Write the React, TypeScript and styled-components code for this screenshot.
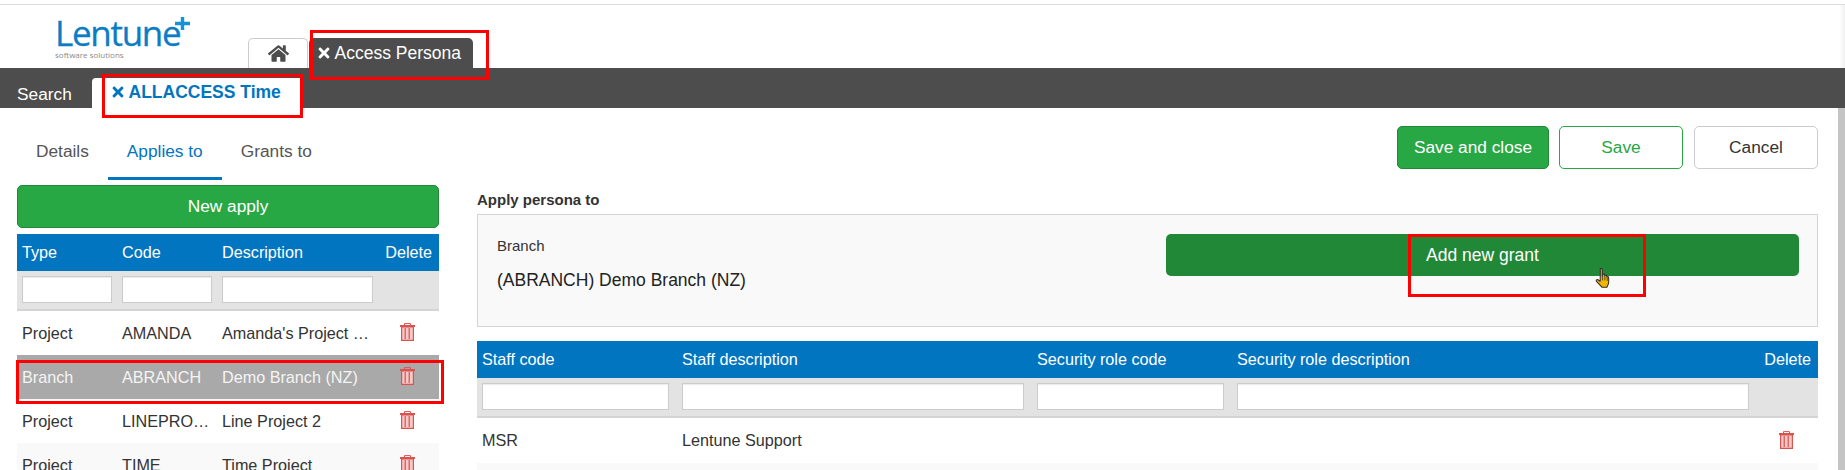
import React from "react"
import styled, { createGlobalStyle } from "styled-components"
import { FaHome, FaTimes } from "react-icons/fa"

const GlobalStyle = createGlobalStyle`
    html, body {
        margin: 0;
        height: 470px;
        overflow: hidden;
        background: #fff;
    }
    body {
        font-family: "Liberation Sans", Arial, sans-serif;
        font-size: 16.2px;
        color: #333;
    }
    * {
        box-sizing: border-box;
    }
`

const BLUE = "#0275c0"
const LEFT_COLUMNS = "90px 90px 151px 1fr"
const RIGHT_COLUMNS = "187px 342px 187px 512px 1fr"

function TrashIcon() {
    return (
        <svg width="15" height="18" viewBox="0 0 15 18" fill="none" stroke="#d9534f">
            <path d="M4.500 2.500V.6h6v1.900" />
            <path d="M0 3h15" strokeWidth="2" />
            <path d="M1.600 4v13.400h11.800V4z" fill="#f5c9c7" strokeWidth="1.200" />
            <path d="M5.200 5v11M9.200 5v11" strokeWidth="1.200" />
        </svg>
    )
}

function HandCursor() {
    return (
        <svg width="17" height="23" viewBox="0 0 18 24">
            <path
                d="M5.600 1.700c1-.8 2.100-.2 2.100 1v7l.5-2.200c1.100-.7 1.900-.2 2 .8v1l.4-.6c1-.5 1.800-.1 1.900 1v.7c1-.6 2-.2 2 1v4.600c0 1.800-1 3.500-1.900 5.200H7.300L1.400 14.800c-.4-1 .5-2 1.700-1.500l2.400 1.600z"
                fill="#f5b400"
                stroke="#2d2d2d"
                strokeWidth="1.100"
                strokeLinejoin="round"
            />
            <path d="M8 10v4M10.500 10v4M13 11v3.500" stroke="#2d2d2d" strokeWidth=".8" />
        </svg>
    )
}

function LogoCross() {
    return (
        <svg width="15" height="13" viewBox="0 0 15 13">
            <path d="M0 6.500h15M7.500 0v13" stroke="#1593d8" strokeWidth="3.400" />
        </svg>
    )
}

const leftRows = [
    { type: "Project", code: "AMANDA", description: "Amanda's Project …" },
    { type: "Branch", code: "ABRANCH", description: "Demo Branch (NZ)" },
    { type: "Project", code: "LINEPRO…", description: "Line Project 2" },
    { type: "Project", code: "TIME", description: "Time Project" },
]

export default function App() {
    return (
        <>
            <GlobalStyle />
            <Page>
                <Header>
                    <Logo>
                        <LogoName>
                            Lentune
                            <LogoPlus><LogoCross /></LogoPlus>
                        </LogoName>
                        <LogoTag>software solutions</LogoTag>
                    </Logo>
                    <HomeTab>
                        <FaHome />
                    </HomeTab>
                    <ModuleTab>
                        <CloseMark><FaTimes /></CloseMark>
                        Access Persona
                        <Highlight $top={-8} $left={1} $width={179} $height={50} />
                    </ModuleTab>
                </Header>
                <Bar>
                    <BarLink>Search</BarLink>
                    <RecordTab>
                        <CloseMark><FaTimes /></CloseMark>
                        ALLACCESS Time
                        <Highlight $top={-4} $left={10} $width={201} $height={44} />
                    </RecordTab>
                </Bar>
                <Main>
                    <LeftColumn>
                        <SubTabs>
                            <SubTab>Details</SubTab>
                            <SubTab $active>Applies to</SubTab>
                            <SubTab>Grants to</SubTab>
                        </SubTabs>
                        <NewButton>New apply</NewButton>
                        <HeadRow $columns={LEFT_COLUMNS} $gap={10}>
                            <HeadCell>Type</HeadCell>
                            <HeadCell>Code</HeadCell>
                            <HeadCell>Description</HeadCell>
                            <DeleteHead>Delete</DeleteHead>
                        </HeadRow>
                        <FilterRow $columns={LEFT_COLUMNS} $gap={10}>
                            <FilterInput />
                            <FilterInput />
                            <FilterInput />
                        </FilterRow>
                        {leftRows.map((row, i) => (
                            <LeftRow key={row.code} $selected={i === 1} $striped={i === 3}>
                                <Cell>{row.type}</Cell>
                                <Cell>{row.code}</Cell>
                                <Cell>{row.description}</Cell>
                                <TrashCell><TrashIcon /></TrashCell>
                                {i === 1 && <Highlight $top={5} $left={-1} $width={428} $height={44} />}
                            </LeftRow>
                        ))}
                    </LeftColumn>
                    <RightColumn>
                        <Actions>
                            <SaveClose>Save and close</SaveClose>
                            <SaveButton>Save</SaveButton>
                            <CancelButton>Cancel</CancelButton>
                        </Actions>
                        <SectionTitle>Apply persona to</SectionTitle>
                        <Panel>
                            <PanelInfo>
                                <PanelLabel>Branch</PanelLabel>
                                <PanelValue>(ABRANCH) Demo Branch (NZ)</PanelValue>
                            </PanelInfo>
                            <GrantButton>
                                Add new grant
                                <Highlight $top={0} $left={242} $width={238} $height={63} />
                                <Pointer><HandCursor /></Pointer>
                            </GrantButton>
                        </Panel>
                        <HeadRow $columns={RIGHT_COLUMNS} $gap={13}>
                            <HeadCell>Staff code</HeadCell>
                            <HeadCell>Staff description</HeadCell>
                            <HeadCell>Security role code</HeadCell>
                            <HeadCell>Security role description</HeadCell>
                            <DeleteHead>Delete</DeleteHead>
                        </HeadRow>
                        <FilterRow $columns={RIGHT_COLUMNS} $gap={13}>
                            <FilterInput />
                            <FilterInput />
                            <FilterInput />
                            <FilterInput />
                        </FilterRow>
                        <StaffRow>
                            <Cell>MSR</Cell>
                            <Cell>Lentune Support</Cell>
                            <Cell />
                            <Cell />
                            <TrashCell><TrashIcon /></TrashCell>
                        </StaffRow>
                        <StripeRow />
                    </RightColumn>
                </Main>
                <Scrollbar />
            </Page>
        </>
    )
}

const Page = styled.div`
    position: relative;
    width: 1845px;
    height: 470px;
    overflow: hidden;
`

const Header = styled.header`
    display: flex;
    align-items: flex-end;
    height: 64px;
    margin-top: 4px;
    padding-left: 55px;
    border-top: 1px solid #ddd;
    background: linear-gradient(to right, #fff calc(100% - 6px), #f1f1f1);
`

const Logo = styled.div`
    align-self: flex-start;
    width: 193px;
    padding-top: 11px;
`

const LogoName = styled.div`
    position: relative;
    width: fit-content;
    font-family: "Open Sans", sans-serif;
    font-size: 35px;
    line-height: 34px;
    letter-spacing: -1.300px;
    color: #0c7cc4;
    -webkit-text-stroke: .3px #0c7cc4;
`

const LogoPlus = styled.span`
    position: absolute;
    top: 1px;
    right: -10px;
    display: flex;
`

const LogoTag = styled.div`
    font-family: "Open Sans", sans-serif;
    font-size: 8px;
    line-height: 9px;
    color: #8a8a8a;
`

const HomeTab = styled.div`
    display: flex;
    align-items: center;
    justify-content: center;
    width: 60px;
    height: 30px;
    margin-right: 1px;
    font-size: 21px;
    color: #4d4d4d;
    background: #fff;
    border: 1px solid #ccc;
    border-bottom: none;
    border-radius: 5px 5px 0 0;
`

const ModuleTab = styled.div`
    position: relative;
    width: 164px;
    height: 30px;
    padding-left: 6.500px;
    font-size: 17.500px;
    line-height: 31px;
    white-space: nowrap;
    color: #fff;
    background: #4d4d4d;
    border-radius: 5px 5px 0 0;
`

const CloseMark = styled.span`
    display: inline-block;
    margin-right: 3px;
    font-size: 16px;
    line-height: 16px;
    vertical-align: -2px;
`

const Highlight = styled.span<{ $top: number; $left: number; $width: number; $height: number }>`
    position: absolute;
    z-index: 2;
    top: ${p => p.$top}px;
    left: ${p => p.$left}px;
    width: ${p => p.$width}px;
    height: ${p => p.$height}px;
    border: 3px solid #f00;
    pointer-events: none;
`

const Bar = styled.nav`
    display: flex;
    align-items: flex-end;
    height: 40px;
    padding-left: 17px;
    background: #4d4d4d;
`

const BarLink = styled.a`
    width: 75px;
    height: 30px;
    font-size: 17.300px;
    line-height: 32px;
    color: #fff;
`

const RecordTab = styled.div`
    position: relative;
    width: 208px;
    height: 30px;
    padding-left: 17.500px;
    font-size: 17.500px;
    font-weight: 700;
    line-height: 28px;
    white-space: nowrap;
    color: ${BLUE};
    background: #fff;
    border-radius: 4px 0 0 0;
`

const Main = styled.main`
    display: flex;
    gap: 38px;
    padding-left: 17px;
`

const LeftColumn = styled.section`
    width: 422px;
`

const SubTabs = styled.div`
    display: flex;
    height: 72px;
    margin-bottom: 5px;
    padding-top: 27px;
`

const SubTab = styled.div<{ $active?: boolean }>`
    height: 45px;
    padding: 6px 19px 0;
    font-size: 17.300px;
    color: ${p => (p.$active ? BLUE : "#555")};
    border-bottom: 3px solid ${p => (p.$active ? BLUE : "transparent")};
`

const NewButton = styled.button`
    display: block;
    width: 100%;
    height: 43px;
    margin-bottom: 6px;
    font: 17.300px "Liberation Sans", sans-serif;
    color: #fff;
    background: #28a745;
    border: 1px solid #218838;
    border-radius: 5px;
`

const HeadRow = styled.div<{ $columns: string; $gap: number }>`
    display: grid;
    grid-template-columns: ${p => p.$columns};
    column-gap: ${p => p.$gap}px;
    align-items: center;
    height: 37px;
    padding-left: 5px;
    color: #fff;
    background: ${BLUE};
`

const HeadCell = styled.span`
    white-space: nowrap;
`

const DeleteHead = styled.span`
    justify-self: end;
    padding-right: 7px;
`

const FilterRow = styled.div<{ $columns: string; $gap: number }>`
    display: grid;
    grid-template-columns: ${p => p.$columns};
    column-gap: ${p => p.$gap}px;
    height: 40px;
    padding: 5px 0 0 5px;
    background: #e3e3e3;
    border-bottom: 2px solid #d4d4d4;
`

const FilterInput = styled.input`
    width: 100%;
    height: 27px;
    background: #fff;
    border: 1px solid #ccc;
    box-shadow: inset 0 1px 1px rgba(0, 0, 0, .08);
`

const Cell = styled.span`
    white-space: nowrap;
`

const LeftRow = styled.div<{ $selected?: boolean; $striped?: boolean }>`
    position: relative;
    display: grid;
    grid-template-columns: ${LEFT_COLUMNS};
    column-gap: 10px;
    align-items: center;
    height: 44px;
    padding-left: 5px;
    color: ${p => (p.$selected ? "#f4f4f4" : "#333")};
    background: ${p => (p.$selected ? "#a9a9a9" : p.$striped ? "#f9f9f9" : "#fff")};
`

const TrashCell = styled.span`
    display: flex;
    justify-content: center;
    padding: 0 7px 2px 0;
`

const RightColumn = styled.section`
    width: 1341px;
`

const Actions = styled.div`
    display: flex;
    justify-content: flex-end;
    gap: 10px;
    height: 79px;
    padding-top: 18px;
`

const BaseButton = styled.button`
    width: 124px;
    height: 43px;
    font: 17.300px "Liberation Sans", sans-serif;
    background: #fff;
    border-radius: 5px;
`

const SaveClose = styled(BaseButton)`
    width: 152px;
    color: #fff;
    background: #28a745;
    border: 1px solid #218838;
`

const SaveButton = styled(BaseButton)`
    color: #28a745;
    border: 1px solid #28a745;
`

const CancelButton = styled(BaseButton)`
    margin-left: 1px;
    color: #333;
    border: 1px solid #ccc;
`

const SectionTitle = styled.h4`
    height: 27px;
    margin: 0;
    padding-top: 5px;
    font-size: 15px;
    font-weight: 700;
    line-height: 16px;
    color: #333;
`

const Panel = styled.div`
    display: flex;
    justify-content: space-between;
    height: 113px;
    margin-bottom: 14px;
    padding: 19px 18px 0 19px;
    background: #f9f9f9;
    border: 1px solid #d4d4d4;
`

const PanelInfo = styled.div`
    padding-top: 3px;
`

const PanelLabel = styled.div`
    margin-bottom: 17px;
    font-size: 15px;
    line-height: 17px;
`

const PanelValue = styled.div`
    font-size: 17.500px;
    line-height: 19px;
    color: #222;
`

const GrantButton = styled.div`
    position: relative;
    width: 633px;
    height: 42px;
    padding-left: 260px;
    font-size: 17.500px;
    line-height: 42px;
    color: #fff;
    background: #218838;
    border-radius: 5px;
`

const Pointer = styled.span`
    position: absolute;
    z-index: 3;
    top: 33px;
    left: 429px;
    display: flex;
`

const StaffRow = styled.div`
    display: grid;
    grid-template-columns: ${RIGHT_COLUMNS};
    column-gap: 13px;
    align-items: center;
    height: 45px;
    padding-left: 5px;
    color: #333;
`

const StripeRow = styled.div`
    height: 44px;
    background: #f9f9f9;
`

const Scrollbar = styled.div`
    position: absolute;
    top: 108px;
    right: 0;
    bottom: 0;
    width: 7px;
    background: #c4c4c4;
`
